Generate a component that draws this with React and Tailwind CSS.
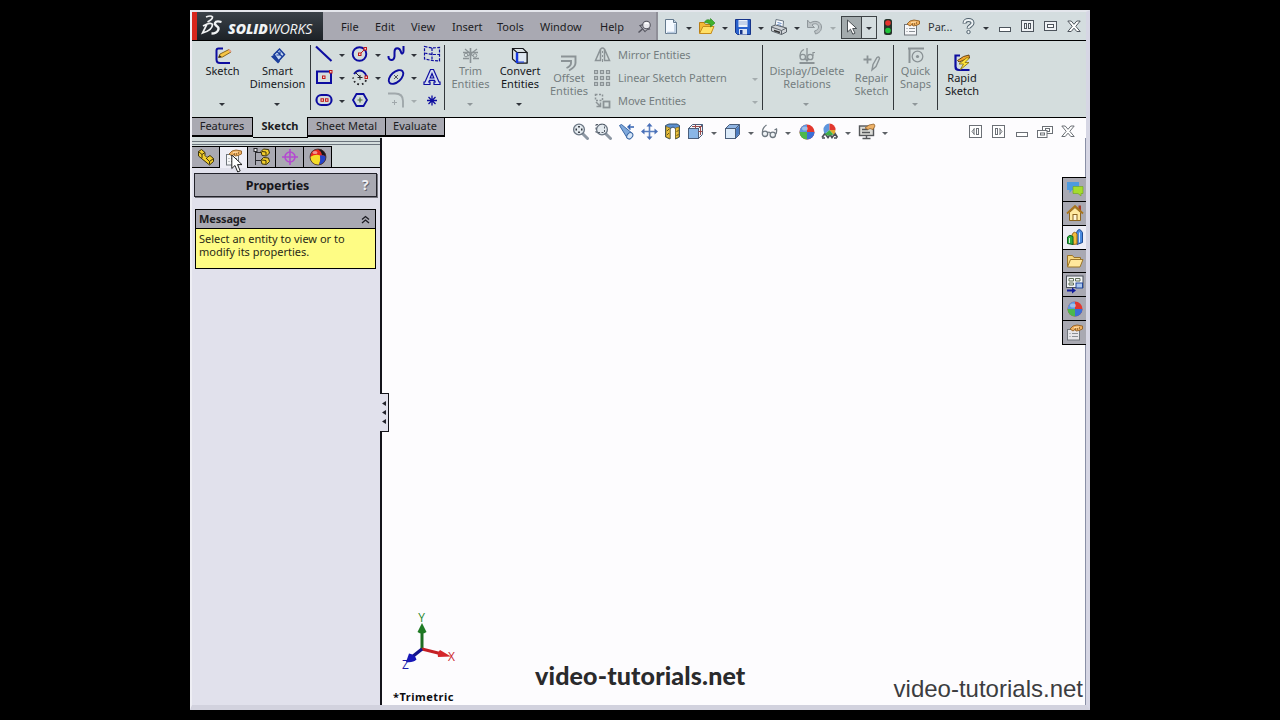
import clsx from 'clsx';

/* ---------- small building blocks ---------- */

function Svg({ w = 18, h = 18, children, className }) {
  return (
    <svg width={w} height={h} viewBox={`0 0 ${w} ${h}`} fill="none" className={clsx('block shrink-0', className)}>
      {children}
    </svg>
  );
}

function Caret({ className = 'text-[#30343a]' }) {
  return (
    <span className="flex w-[14px] shrink-0 items-center justify-center">
      <svg width="6" height="3" viewBox="0 0 6 3" className={clsx('mt-[3px] block', className)}>
        <path d="M0 0h6L3 3z" fill="currentColor" />
      </svg>
    </span>
  );
}

function Slot({ className = 'w-[22px]', children }) {
  return <span className={clsx('flex shrink-0 items-center justify-center', className)}>{children}</span>;
}

/* ---------- title bar icons ---------- */

const PinIcon = () => (
  <Svg w={16} h={16}>
    <path d="M1.500 13.500l4-3.500" stroke="#55555f" strokeWidth="1.600" />
    <path d="M3 6.500q3 0 4.500-3l5 6.500q-3 .5-4.500 2.500z" fill="#c2c2ca" stroke="#55555f" strokeWidth="1.100" />
    <circle cx="9.500" cy="6" r="3.800" fill="#e8e8ec" stroke="#55555f" strokeWidth="1.100" />
    <path d="M8 5q1.500-2 3.500 0" stroke="#fff" strokeWidth="1.500" />
  </Svg>
);

const NewIcon = () => (
  <Svg w={16} h={18}>
    <path d="M2.500 1.500h8l3 3v11h-11z" fill="#f4f9ff" stroke="#64798d" />
    <path d="M10.500 1.500v3h3" fill="#c6d6e6" stroke="#64798d" />
    <path d="M12 6v9M4 14.500h8" stroke="#b4c8de" strokeWidth="1.500" />
  </Svg>
);

const OpenIcon = () => (
  <Svg w={18} h={18}>
    <path d="M1.500 15V4.500h4.500l1.500 2h6V15z" fill="#f3b936" stroke="#b97e14" />
    <path d="M1.500 15.500l3.500-7h11l-3 7z" fill="#ffe066" stroke="#c68d1c" />
    <path d="M6.500 4.500c1-3 4-3.500 6-2V.5l4.500 4.500-4.500 4V6.500c-2-1.500-4-2-6-2z" fill="#40b22e" stroke="#23861a" strokeWidth=".6" />
  </Svg>
);

const SaveIcon = () => (
  <Svg w={16} h={16}>
    <path d="M.5.500h15v15H2.500l-2-2z" fill="#2a62cc" stroke="#16348a" />
    <rect x="3.500" y="1" width="9" height="7" fill="#edf3fb" />
    <path d="M4 3h8M4 5h8" stroke="#9cb2d8" />
    <rect x="4" y="10" width="8" height="5.500" fill="#dbe4f3" />
    <rect x="5" y="11" width="2.500" height="4" fill="#16348a" />
  </Svg>
);

const PrintIcon = () => (
  <Svg w={18} h={18}>
    <path d="M5 8l1-6.500 7.500 1.500-.5 6z" fill="#fafcff" stroke="#6c7884" />
    <path d="M7.500 4.500l4 1M7.300 6.500l4 1" stroke="#5f86c0" />
    <path d="M1.500 8.500l4-1.500 11 3v4l-5 2.500-10-3.500z" fill="#cfd3d7" stroke="#5d646b" />
    <path d="M1.500 9l10 3.500 5-2.500M11.500 12.500v4" stroke="#5d646b" />
    <path d="M4 12.500l6 2" stroke="#333" strokeWidth="1.500" />
  </Svg>
);

const UndoIcon = () => (
  <Svg w={18} h={18}>
    <path d="M1.500 2v7.500h7L6 7c3-2.500 6.500-1 6.500 2 0 2-1.500 3.500-4 4l1 3c4-1 6-3.500 6-7 0-5-6-7.500-11.500-4z" fill="#bcc3c6" stroke="#8f979b" />
  </Svg>
);

const ArrowIcon = () => (
  <Svg w={12} h={17}>
    <path d="M1.500 1v12l3-2.800 2.300 5 2.200-1-2.300-4.700h4z" fill="#fff" stroke="#4a5054" />
  </Svg>
);

const TrafficIcon = () => (
  <Svg w={10} h={18}>
    <rect x="1" y="1" width="8" height="16" rx="2.500" fill="#26332b" />
    <circle cx="5" cy="5" r="2.800" fill="#e5322d" />
    <circle cx="5" cy="12.500" r="2.800" fill="#1fc43a" />
  </Svg>
);

/* sheet with a pointing hand */
const HandSheet = ({ grey }) => (
  <Svg w={17} h={17}>
    <rect x="1.500" y="5.500" width="12" height="10.500" fill={grey ? '#e6e6ea' : '#f7f8fa'} stroke="#70767c" />
    <path d="M3.500 9.500h1M3.500 12.500h1M6 9.500h6M6 12.500h6" stroke="#8b9095" />
    <path d="M4 5L7 2l4-1 5.500 1v3l-3.500 1.500-3 .5-1-1.500L7 7z" fill="#f0b060" stroke="#935f22" strokeWidth=".9" />
    <path d="M8 3.500l5-.5" stroke="#ffdfae" />
    <path d="M11 5h1M13 4h1M9 5h1" stroke="#5d3c14" />
  </Svg>
);

const HelpIcon = () => (
  <Svg w={13} h={17}>
    <path d="M2.500 5.500C2.500 1 10.500 1 10.500 5c0 3-4 2.500-4 5.500" stroke="#50606c" strokeWidth="4" />
    <path d="M2.500 5C2.500 1 10.500 1 10.500 5c0 3-4 2.500-4 5" stroke="#eef3f5" strokeWidth="2" />
    <circle cx="6.500" cy="14" r="1.700" fill="#eef3f5" stroke="#50606c" />
  </Svg>
);

const MinIcon = ({ c }) => (
  <Svg w={14} h={14}>
    <rect x="1.500" y="7.500" width="11" height="4" fill="#fff" stroke={c} />
  </Svg>
);

const CloseIcon = ({ c }) => (
  <Svg w={14} h={14}>
    <path d="M.8 1h3.400L7 4.300 9.800 1h3.400L8.800 6.300l4.400 5.200H9.800L7 8.200l-2.800 3.300H.8l4.400-5.200z" fill="#fff" stroke={c} />
  </Svg>
);

const ColsIcon = ({ c }) => (
  <Svg w={13} h={13}>
    <rect x=".5" y=".5" width="12" height="11" fill="#eef1f4" stroke={c} />
    <rect x="3.500" y="3.500" width="2" height="5" stroke={c} />
    <rect x="7.500" y="3.500" width="2" height="5" stroke={c} />
  </Svg>
);

const MaxIcon = ({ c }) => (
  <Svg w={13} h={13}>
    <rect x=".5" y="1.500" width="12" height="9" fill="#eef1f4" stroke={c} />
    <rect x="3.500" y="4.500" width="6" height="3" fill="#fff" stroke={c} />
  </Svg>
);

const RestoreIcon = ({ c }) => (
  <Svg w={16} h={14}>
    <rect x="5.500" y="1.500" width="10" height="7" fill="#fff" stroke={c} />
    <rect x="8.500" y="3.500" width="4" height="3" fill="#fff" stroke={c} />
    <rect x=".5" y="5.500" width="9.500" height="7" fill="#fff" stroke={c} />
    <rect x="3.500" y="8" width="4" height="2" fill="#fff" stroke={c} />
  </Svg>
);

const PaneIcon = ({ c, flip }) => (
  <Svg w={13} h={13} className={flip && '-scale-x-100'}>
    <rect x=".5" y=".5" width="12" height="12" fill="#fff" stroke={c} />
    <path d="M5.500 3.500L3 6.500l2.500 3M5 3.500v6" stroke={c} />
    <rect x="7.500" y="3.500" width="2" height="6" stroke={c} />
  </Svg>
);

/* ---------- ribbon icons ---------- */

const NAVY = '#0d0da0';
const GREY = '#8b9396';

const SketchIcon = () => (
  <Svg w={18} h={18}>
    <path d="M9 1.500H4.500Q2.500 1.500 2.500 3.500v9Q2.500 16 6 16h10" stroke={NAVY} strokeWidth="2" />
    <path d="M4.500 10.500l1.500-3.500 9-4.500 2 2.500-8.500 5z" fill="#f6c544" stroke="#7d5a12" strokeWidth=".9" />
    <path d="M4.500 10.500l1-2.500 2 2z" fill="#222" />
    <path d="M14 3l1.500-1 2 2.500-1.500 1z" fill="#e8a08c" />
  </Svg>
);

const SmartDimIcon = () => (
  <Svg w={18} h={18}>
    <path d="M5 7.500L10.500 2l5 5.500-6 6.500z" fill="#c3d6f0" stroke="#173a9a" strokeWidth="1.500" />
    <path d="M2 9.500l7 7 2-2-6.500-6.500z" fill="#1c3f9c" />
    <path d="M8 4.500l5 5M7.500 8h3.500V4.500" stroke="#173a9a" strokeWidth="1.200" />
  </Svg>
);

const TrimIcon = () => (
  <Svg w={18} h={18}>
    <path d="M1 5.500h15M1 11.500h6M11 11.500h6M8.500 1v15" stroke={GREY} strokeWidth="1.600" />
    <path d="M3 2l8 7M15 2l-9 7" stroke={GREY} strokeWidth="1.200" />
    <circle cx="4" cy="8" r="1.800" stroke={GREY} />
    <circle cx="13" cy="8.500" r="1.800" stroke={GREY} />
  </Svg>
);

const ConvertIcon = () => (
  <Svg w={18} h={18}>
    <path d="M1.500 1.500h10.500l4 4v10.500h-10l-4.500-4z" fill="#dde4e9" stroke="#16181c" strokeWidth="1.200" />
    <path d="M1.500 1.500l4.500 4h10" stroke="#16181c" strokeWidth="1.100" />
    <rect x="6.500" y="5.500" width="9.500" height="10.500" fill="#dfe8f2" stroke="#16181c" strokeWidth="1.100" />
    <path d="M6 5.500V16" stroke="#1537e0" strokeWidth="2.400" />
    <path d="M7 15h6" stroke="#1537e0" />
  </Svg>
);

const OffsetIcon = () => (
  <Svg w={18} h={18}>
    <path d="M1 2.500h14.500V9Q15.500 13 9 16.500M1 7h10V9q0 3-4.500 5" stroke={GREY} strokeWidth="1.900" />
  </Svg>
);

const MirrorIcon = () => (
  <Svg w={17} h={16}>
    <path d="M6.500 2L1.500 13.500h5zM10.500 2l5 11.500h-5z" stroke={GREY} strokeWidth="1.500" />
    <path d="M6.500 2q2-2 4 0" stroke={GREY} strokeWidth="1.300" />
    <path d="M8.500 4v2M8.500 8v2M8.500 12v3" stroke={GREY} />
  </Svg>
);

const PatternIcon = () => (
  <Svg w={17} h={16}>
    {[2, 8, 14].map(y =>
      [2, 8, 14].map(x => (
        <rect key={`${x}-${y}`} x={x - 1.5} y={y - 1.5} width="3" height="3" fill="#c3cbcd" stroke={GREY} strokeWidth="1.200" />
      ))
    )}
  </Svg>
);

const MoveIcon = () => (
  <Svg w={17} h={16}>
    <rect x="1.500" y="1.500" width="7" height="6" stroke={GREY} strokeWidth="1.500" strokeDasharray="2 1.500" />
    <rect x="9.500" y="8.500" width="6" height="6" stroke={GREY} strokeWidth="1.800" />
    <path d="M2 9l4 4M6.500 9.500v4h-4" stroke={GREY} strokeWidth="1.500" />
  </Svg>
);

const RelationsIcon = () => (
  <Svg w={18} h={18}>
    <path d="M1.500 16h15" stroke={GREY} strokeWidth="2" />
    <path d="M9 1v13M7 11.500l2 2.500 2-2.500" stroke={GREY} strokeWidth="1.300" />
    <path d="M6 2.500Q2 4 2 9.500" stroke={GREY} strokeWidth="1.300" />
    <circle cx="4.800" cy="10" r="2.700" stroke={GREY} strokeWidth="1.300" />
    <circle cx="12.200" cy="10" r="2.700" stroke={GREY} strokeWidth="1.300" />
    <path d="M15 9V5.500h2" stroke={GREY} strokeWidth="1.200" />
  </Svg>
);

const RepairIcon = () => (
  <Svg w={18} h={18}>
    <path d="M4.500 1.500v8M.5 5.500h8" stroke={GREY} strokeWidth="1.800" />
    <path d="M9 16l1-5.500 4-7q2-1.500 2.500 1l-3.500 8z" stroke={GREY} strokeWidth="1.400" />
  </Svg>
);

const SnapsIcon = () => (
  <Svg w={18} h={18}>
    <path d="M1 1.500h16M2.500 1.500V16" stroke={GREY} strokeWidth="2" />
    <circle cx="10.500" cy="9.500" r="5.300" stroke={GREY} strokeWidth="1.300" />
    <circle cx="10.500" cy="9.500" r="1.600" fill={GREY} />
  </Svg>
);

const RapidIcon = () => (
  <Svg w={18} h={18}>
    <path d="M7 1.500H2.500v11q0 3.500 3.500 3.500h10.500" stroke={NAVY} strokeWidth="2.200" />
    <path d="M4.500 6.500l6-4 5.500-1.500.5 3-5.500 2-5 2z" fill="#f0a62c" stroke="#5c3a08" strokeWidth=".9" />
    <path d="M14 3.500l-8 6.500h4.500l-3.500 6 9-7.500h-4l4-4z" fill="#ffe53c" stroke="#836a08" strokeWidth=".8" />
  </Svg>
);

const Dot = ({ x, y }) => <rect x={x - 1} y={y - 1} width="2.500" height="2.500" fill="#f6d0d0" stroke="#c01818" strokeWidth="1" />;

const LineIcon = () => (
  <Svg><path d="M1 1.500L16.500 16" stroke={NAVY} strokeWidth="2.100" /></Svg>
);
const CircleIcon = () => (
  <Svg>
    <circle cx="8.500" cy="9" r="6.800" stroke={NAVY} strokeWidth="1.900" />
    <path d="M9 9l5-5" stroke="#c01818" />
    <Dot x={8.5} y={9} /><Dot x={14} y={3.5} />
  </Svg>
);
const SplineIcon = () => (
  <Svg>
    <path d="M1.500 11c-.5 5 5.500 5.500 6 .5V7c0-5 5-5 6.500 0 .5 2.500 2.500 2 2.500-1V1" stroke={NAVY} strokeWidth="2" />
  </Svg>
);
const PlaneIcon = () => (
  <Svg>
    <path d="M1.500 1.500l7.500 1.500 7.500-.5v13.500l-7.500-.5-7.500-1.500zM1.500 8l7.500 1.500h7.500M9 3v13" stroke={NAVY} strokeWidth="1.200" strokeDasharray="3 1.300" />
  </Svg>
);
const RectIcon = () => (
  <Svg>
    <rect x="2" y="3.500" width="14" height="11.500" stroke={NAVY} strokeWidth="2" />
    <Dot x={8.5} y={9} /><Dot x={15.500} y={3.500} />
  </Svg>
);
const ArcIcon = () => (
  <Svg>
    <path d="M3 6Q7 .5 12 3.500q3 2 3.500 5" stroke={NAVY} strokeWidth="1.900" />
    <path d="M15 12q-1 4-6 4.500-6-.5-7-7" stroke="#26262a" strokeWidth="1.800" strokeDasharray="1.800 2.600" />
    <path d="M4 4l5 5M9 7v5M6.500 9.500h5" stroke="#26262a" />
    <Dot x={15} y={9} />
  </Svg>
);
const EllipseIcon = () => (
  <Svg>
    <ellipse cx="9" cy="9" rx="8.700" ry="5" transform="rotate(-42 9 9)" stroke={NAVY} strokeWidth="1.900" />
    <path d="M7 7l4 4M11 7l-4 4" stroke="#50545c" />
  </Svg>
);
const LetterIcon = () => (
  <Svg>
    <path
      d="M7.500 1.500h3l5.500 12.500h1v2.500h-6v-2.500h1.200l-.7-1.700H6.500L5.800 14H7v2.500H1V14h1z"
      fill="#d5ddf0"
      stroke={NAVY}
      strokeWidth="1.200"
    />
    <path d="M9 5.500l1.800 4.500H7.200z" fill="#d4dddd" stroke={NAVY} strokeWidth="1.200" />
  </Svg>
);
const SlotIcon = () => (
  <Svg>
    <rect x="1.500" y="4" width="15" height="10" rx="4.800" stroke={NAVY} strokeWidth="2.100" />
    <Dot x={7} y={8.800} /><Dot x={11.500} y={8.800} />
  </Svg>
);
const HexIcon = () => (
  <Svg>
    <path d="M5.500 3h7L16 9l-3.500 6h-7L2 9z" stroke={NAVY} strokeWidth="1.800" />
    <path d="M9 6.500v5M6.500 9h5" stroke="#4c6e3a" strokeWidth="1.200" />
  </Svg>
);
const FilletIcon = () => (
  <Svg>
    <path d="M1 2.500h7q8 0 8 7.500v6.500" stroke="#a0a8ab" strokeWidth="1.900" />
    <path d="M7.500 9v5M5 11.500h5" stroke="#a0a8ab" />
  </Svg>
);
const PointIcon = () => (
  <Svg>
    <path d="M9 4.500v10M4 9.500h10M5.500 6l7 7M12.500 6l-7 7" stroke={NAVY} strokeWidth="1.300" />
  </Svg>
);

/* ---------- heads-up view icons ---------- */

const ZoomFit = ({ dashed }) => (
  <Svg w={17} h={17}>
    <path d="M10 10l5.500 5.500" stroke="#8d97a3" strokeWidth="3" strokeLinecap="round" />
    <circle cx="7" cy="6.500" r="5.400" fill="#e3e9ee" stroke="#6b7683" strokeWidth="1.300" />
    {dashed
      ? <path d="M1 1.500h8.500v8H1z" stroke="#555d68" strokeDasharray="2 1.500" />
      : <path d="M7 3v1.500M7 8.500V10M3.500 6.500H5M9 6.500h1.500" stroke="#30363e" strokeWidth="1.800" />}
  </Svg>
);
const PrevView = () => (
  <Svg w={17} h={17}>
    <path d="M1.500 2.500l2-1 11 9q1 4-5 5z" fill="#7fa9dc" stroke="#3c68a5" />
    <ellipse cx="11.800" cy="12.800" rx="3.500" ry="2.600" transform="rotate(-50 11.800 12.800)" fill="#d6e6f8" stroke="#3c68a5" />
    <path d="M16 4h-5M12.500 1.500L10 4l2.500 2.500" stroke="#2f5fb0" strokeWidth="1.400" />
  </Svg>
);
const PanIcon = () => (
  <Svg w={17} h={17}>
    <path d="M8.500 2v13M2 8.500h13" stroke="#5a7fc0" strokeWidth="1.600" />
    <path d="M8.500 0l3 3.500h-6zM8.500 17l3-3.500h-6zM0 8.500l3.500-3v6zM17 8.500l-3.500-3v6z" fill="#4a70b8" />
  </Svg>
);
const SectionIcon = () => (
  <Svg w={17} h={17}>
    <path d="M1.500 2.500L5 1h8l2.500 1.500v11.500l-4 2V5.500L9 4 6 5.500V16l-4.500-2z" fill="#5b8fd0" stroke="#35536f" />
    <path d="M2 3.500v10.500l4 1.500V5zM11.500 5v10.500l3.500-1.500V4z" fill="#e9bf3a" stroke="#7b651d" strokeWidth=".7" />
    <path d="M3 8l2-2M3 12l2-2M12.500 9l2-2M12.500 13l2-2" stroke="#6a5516" />
  </Svg>
);
const CubeIcon = ({ lines }) => (
  <Svg w={17} h={17}>
    <path d="M1.500 5.500l4-4h10v10l-4 4h-10z" fill={lines ? '#f3f5f8' : '#8fb4e2'} stroke="#4b5f7c" />
    <path d="M11.500 5.500l4-4" stroke="#4b5f7c" />
    <rect x="1.500" y="5.500" width="10" height="10" fill={lines ? '#8ab6e6' : '#dcebfa'} stroke="#4b5f7c" />
    {!lines && <path d="M12 6l3-3v8l-3 3.500z" fill="#4d7cc0" />}
    {lines && <path d="M8.500 1.500v4M5 3.500h10M13.500 3v9M11.500 8.500h4" stroke="#9a4c4c" />}
  </Svg>
);
const GlassesIcon = () => (
  <Svg w={17} h={15}>
    <path d="M5.500 1Q1 4 1.500 9M7 8.500q1.500-1 2.500 1M15 10q1-3 .5-5l-2 1" stroke="#6f7880" strokeWidth="1.300" />
    <circle cx="4" cy="9.800" r="2.700" fill="#eef2f5" stroke="#6f7880" strokeWidth="1.300" />
    <circle cx="11.800" cy="10.800" r="2.700" fill="#eef2f5" stroke="#6f7880" strokeWidth="1.300" />
  </Svg>
);

/* quarters go clockwise from the top right */
const Ball = ({ colors }) => (
  <svg width="16" height="16" viewBox="0 0 16 16" className="block shrink-0">
    <circle cx="8" cy="8" r="7.500" fill={colors[0]} />
    <path d="M8 8h7.500A7.500 7.500 0 0 1 8 15.500z" fill={colors[1]} />
    <path d="M8 8H.5A7.500 7.500 0 0 0 8 15.500z" fill={colors[2]} />
    <path d="M8 8V.5A7.500 7.500 0 0 0 .5 8z" fill={colors[3]} />
    <ellipse cx="6" cy="4.500" rx="3" ry="2" fill="#fff" opacity=".4" />
  </svg>
);
const AppearanceBall = () => <Ball colors={['#e2382e', '#3c6fd6', '#4cb84c', '#5d96dd']} />;

const RenderBall = () => (
  <Svg w={18} h={18}>
    <circle cx="9" cy="9" r="8" fill="#e6281e" />
    <path d="M9 1a8 8 0 0 1 8 8q-1.500-2-4-2Q12 3 9 1z" fill="#18181c" />
    <path d="M1 9q6-3.500 10-1.500 1 4-1 9.500A8 8 0 0 1 1 9z" fill="#f5dc28" />
    <path d="M11 7.500q4-1 6 1.500a8 8 0 0 1-7 8q2-5 1-9.500z" fill="#2444cc" />
    <circle cx="9" cy="9" r="8" stroke="#3a3030" strokeWidth=".8" />
    <ellipse cx="6" cy="4.500" rx="2.500" ry="1.500" fill="#fff" opacity=".5" />
  </Svg>
);
const SceneIcon = () => (
  <Svg w={17} h={17}>
    <path d="M1 14.500l3-4 3 4 2-3 2 3 3-4 2.500 4M1 15h3M13 15h3" stroke="#4a4f55" strokeWidth="1.700" />
    <path d="M8.500 7V.5A6 6 0 0 0 2.500 7q0 2 1.500 4z" fill="#5d96dd" />
    <path d="M8.500 7V.5A6 6 0 0 1 14.500 7z" fill="#e2382e" />
    <path d="M8.500 7h6q0 3-2 4.500z" fill="#e2a82e" />
    <path d="M8.500 7L4 11q2 2 5 1.500l3.500-1z" fill="#3fae48" />
  </Svg>
);
const MonitorIcon = () => (
  <Svg w={18} h={17}>
    <rect x="1.500" y="3" width="14" height="9.500" fill="#dcdcd8" stroke="#55575a" strokeWidth="1.400" />
    <path d="M4 6.500h6M4 9.500h8M8.500 13v2M4.500 15.500h8" stroke="#55575a" strokeWidth="1.400" />
    <path d="M7 5l4-3 5-1 1 2-2 3.500-3-1-2 1z" fill="#eeb268" stroke="#96632a" strokeWidth=".8" />
  </Svg>
);

/* ---------- manager panel + task pane icons ---------- */

const PartIcon = () => (
  <Svg w={18} h={18}>
    <path d="M1.500 3.500l3-2 3.500 3v3l2 2 3-2 3.500 3v3l-4 3.500L1.500 8z" fill="#f2ce2c" stroke="#3f350c" />
    <path d="M1.500 3.500l3.500 3v3.500M5 6.500l3-2M12.500 13.500v3M12.500 13.500L9 10M12.500 13.500l4-3" stroke="#3f350c" />
  </Svg>
);
const TreeIcon = () => (
  <Svg w={18} h={18}>
    <path d="M2.500 1v16M2.500 4.500h6M2.500 12.500h6" stroke="#2a2a2e" />
    <rect x="1" y=".5" width="3" height="3" fill="#eee" stroke="#2a2a2e" />
    <path d="M8 3.500l2.500-2.500 5 .5 1 3.500-3 3-4.500-.5zM8 12l2.500-2.500 5 .5 1 3.500-3 3-4.500-.5z" fill="#f2ce2c" stroke="#3f350c" />
    <path d="M9 3.500l4 .5v3.500M9 12l4 .5V16" stroke="#3f350c" />
  </Svg>
);
const TargetIcon = () => (
  <Svg w={18} h={18}>
    <circle cx="9" cy="9" r="5" stroke="#b44ad0" strokeWidth="1.600" />
    <path d="M9 1v16M1 9h16" stroke="#b44ad0" strokeWidth="1.600" />
  </Svg>
);
const ChatIcon = () => (
  <Svg w={18} h={18}>
    <path d="M1 2h12v8H6l-2.500 3V10H1z" fill="#4d9ade" />
    <path d="M7 6.500h10v7h-2v2.500L12 13.500H7z" fill="#a5dc2e" stroke="#6da31c" strokeWidth=".6" />
  </Svg>
);
const HomeIcon = () => (
  <Svg w={18} h={18}>
    <path d="M12.500 1.500h2.500v6h-2.500z" fill="#a63c28" />
    <path d="M3.500 8.500L9 3.500l5.500 5v8h-11z" fill="#ffe9a0" stroke="#8c6420" />
    <path d="M1 9.500l8-7.500 8 7.500" stroke="#a8741c" strokeWidth="1.800" />
    <rect x="7" y="10.500" width="4" height="6" fill="#fff7d8" stroke="#8c6420" />
  </Svg>
);
const LibraryIcon = () => (
  <Svg w={18} h={18}>
    <path d="M10.500 4.500q2.500-6 6 0v10l-5.500 2z" fill="#4a8ade" stroke="#1f4a90" />
    <path d="M6 7q2-5 5-1v10l-4 .5z" fill="#f4bc3c" stroke="#96681a" />
    <path d="M1.500 9q2-3 5.500-.5v8l-5.500-1z" fill="#2fb040" stroke="#0f5e22" />
    <path d="M3.500 10v5M13.500 4.500v10" stroke="#fff" strokeOpacity=".8" />
  </Svg>
);
const FolderIcon = () => (
  <Svg w={18} h={18}>
    <path d="M1.500 14.500V3.500h5l1.500 2h6.500v3" fill="#f6d67c" stroke="#9a7428" />
    <path d="M1.500 15l3-7.500h12.500l-3 7.500z" fill="#ffe79c" stroke="#9a7428" />
  </Svg>
);
const PaletteIcon = () => (
  <Svg w={18} h={19}>
    <rect x=".5" y="1" width="16.500" height="11.500" fill="#f4f6f8" stroke="#4b5158" />
    <path d="M3 3.500h4.500v2.500H3zM9.500 3.500H14V6H9.500zM3 8h4.500v2H3z" stroke="#5f6f55" />
    <rect x="10" y="8" width="6.500" height="5" fill="#aac6ee" stroke="#23479a" />
    <path d="M1 15.500h6" stroke="#101c9c" strokeWidth="2" />
    <path d="M6 12.500l4 3-4 3z" fill="#101c9c" />
  </Svg>
);

/* ---------- data ---------- */

const menus = [
  { label: 'File', w: 'w-[34px]' },
  { label: 'Edit', w: 'w-[36px]' },
  { label: 'View', w: 'w-[41px]' },
  { label: 'Insert', w: 'w-[45px]' },
  { label: 'Tools', w: 'w-[43px]' },
  { label: 'Window', w: 'w-[60px]' },
  { label: 'Help', w: 'w-[37px]' },
];

const quickAccess = [NewIcon, OpenIcon, SaveIcon, PrintIcon];

const sketchTools = [
  [LineIcon, CircleIcon, SplineIcon, PlaneIcon],
  [RectIcon, ArcIcon, EllipseIcon, LetterIcon],
  [SlotIcon, HexIcon, FilletIcon, PointIcon],
];

const listTools = [
  { icon: MirrorIcon, label: 'Mirror Entities' },
  { icon: PatternIcon, label: 'Linear Sketch Pattern', caret: true },
  { icon: MoveIcon, label: 'Move Entities', caret: true },
];

const tabs = [
  { label: 'Features', w: 'w-[61px]' },
  { label: 'Sketch', w: 'w-[55px]', active: true },
  { label: 'Sheet Metal', w: 'w-[78px]' },
  { label: 'Evaluate', w: 'w-[59px]' },
];

const taskPane = [ChatIcon, HomeIcon, LibraryIcon, FolderIcon, PaletteIcon, AppearanceBall, () => <HandSheet grey />];

/* ---------- sections ---------- */

function Logo() {
  return (
    <div className="flex h-[28px] w-[131px] shrink-0 items-center border-l-[5px] border-[#d8261c] bg-linear-to-b from-[#3b4249] to-[#1d2227]">
      <Svg w={24} h={24} className="ml-[3px]">
        <path d="M6 3q5-2 6.500 0 0 2.500-5 5" stroke="#f1f3f4" strokeWidth="1.700" />
        <path d="M3 12q8-4.500 9.500-1.500 0 5.500-10 8.500l4.500-9" stroke="#f1f3f4" strokeWidth="1.700" />
        <path d="M21.500 8q-5.500-1.500-6.500 1-.5 1.500 2 3.200t1 4.300q-1.500 3-6.500 3" stroke="#f1f3f4" strokeWidth="2.300" />
      </Svg>
      <span className="mt-[6px] ml-[4px] whitespace-nowrap font-['Open_Sans',sans-serif] text-[14px] leading-none text-[#f1f3f4] italic">
        <b className="font-extrabold">SOLID</b>
        <span className="tracking-[-0.15px]">WORKS</span>
      </span>
    </div>
  );
}

function TitleBar() {
  const c = '#4d545c';
  return (
    <header className="flex h-[29px] border-b border-black bg-[#d4dddf]">
      <Logo />
      <div className="flex w-[335px] shrink-0 items-center border-r-2 border-[#8f8f98] bg-[#a9a9b2] pt-[2px] pl-[18px] text-[#1c1c22]">
        {menus.map(m => (
          <span key={m.label} className={m.w}>{m.label}</span>
        ))}
        <span><PinIcon /></span>
      </div>
      <div className="flex flex-1 items-center pt-[2px] pl-[2px]">
        {quickAccess.map((Icon, i) => (
          <span key={i} className="flex items-center">
            <Slot><Icon /></Slot>
            <Caret />
          </span>
        ))}
        <Slot><UndoIcon /></Slot>
        <Caret className="text-[#a4acae]" />
        <span className="ml-[1px] flex h-[23px] w-[36px] border border-[#3d4346]">
          <span className="flex w-[22px] items-center justify-center border-r border-[#3d4346] bg-[#a3abad]"><ArrowIcon /></span>
          <Caret />
        </span>
        <Slot><TrafficIcon /></Slot>
        <Slot className="w-[25px]"><HandSheet /></Slot>
        <span className="ml-[4px] w-[29px] text-[#2e3338]">Par...</span>
        <Slot className="w-[22px] pb-[2px]"><HelpIcon /></Slot>
        <Caret />
        <span className="flex pb-px">
          <Slot className="w-[23px]"><MinIcon c={c} /></Slot>
          <Slot className="w-[23px]"><ColsIcon c={c} /></Slot>
          <Slot className="w-[23px]"><MaxIcon c={c} /></Slot>
          <Slot className="w-[23px]"><CloseIcon c={c} /></Slot>
        </span>
      </div>
    </header>
  );
}

function BigButton({ icon: Icon, lines, w, caret, disabled, low }) {
  return (
    <div className={clsx('flex shrink-0 flex-col items-center', w, low ? 'pt-[13px]' : 'pt-[6px]', disabled ? 'text-[#757d80]' : 'text-[#16181c]')}>
      <Icon />
      <div className="-mt-px text-center leading-[13px] whitespace-nowrap">
        {lines.map(l => <div key={l}>{l}</div>)}
      </div>
      {caret && (
        <div className={clsx('-translate-x-px', lines.length === 1 ? 'mt-[23px]' : 'mt-[10px]')}>
          <Caret className={disabled ? 'text-[#8f979a]' : undefined} />
        </div>
      )}
    </div>
  );
}

const Divider = () => <div className="mt-[4px] h-[65px] w-px shrink-0 bg-[#33383b]" />;

function Ribbon() {
  return (
    <section className="flex h-[77px] border-b border-black bg-[#d4dddd]">
      <BigButton icon={SketchIcon} lines={['Sketch']} w="w-[61px]" caret />
      <BigButton icon={SmartDimIcon} lines={['Smart', 'Dimension']} w="w-[49px] mr-[8px]" caret />
      <Divider />
      <div className="ml-[2px] flex w-[131px] shrink-0 flex-col pt-[1px]">
        {sketchTools.map((row, r) => (
          <div key={r} className="flex h-[23px] items-center">
            {row.map((Icon, i) => (
              <span key={i} className="flex items-center">
                <Slot><Icon /></Slot>
                {i < 3 && (
                  <Caret
                    className={clsx(
                      r === 2 && i === 1 && 'opacity-0',
                      r === 2 && i === 2 ? 'text-[#a4acae]' : 'text-[#30343a]'
                    )}
                  />
                )}
              </span>
            ))}
          </div>
        ))}
      </div>
      <Divider />
      <BigButton icon={TrimIcon} lines={['Trim', 'Entities']} w="w-[51px]" caret disabled />
      <BigButton icon={ConvertIcon} lines={['Convert', 'Entities']} w="w-[48px]" caret />
      <BigButton icon={OffsetIcon} lines={['Offset', 'Entities']} w="w-[50px]" disabled low />
      <div className="flex w-[168px] shrink-0 flex-col pt-[2px] text-[#757d80]">
        {listTools.map(({ icon: Icon, label, caret }) => (
          <div key={label} className="flex h-[23px] items-center">
            <Icon />
            <span className="ml-[7px] flex-1 tracking-[-0.08px] whitespace-nowrap">{label}</span>
            {caret && <Caret className="text-[#a4acae]" />}
          </div>
        ))}
      </div>
      <Divider />
      <BigButton icon={RelationsIcon} lines={['Display/Delete', 'Relations']} w="w-[88px]" caret disabled />
      <BigButton icon={RepairIcon} lines={['Repair', 'Sketch']} w="w-[41px] mr-px" disabled low />
      <Divider />
      <BigButton icon={SnapsIcon} lines={['Quick', 'Snaps']} w="w-[43px]" caret disabled />
      <Divider />
      <BigButton icon={RapidIcon} lines={['Rapid', 'Sketch']} w="w-[48px]" low />
    </section>
  );
}

function TabRow() {
  const g = '#6c7076';
  const dim = 'text-[#5d6166]';
  return (
    <div className="relative z-10 flex h-[20px] bg-[#fdfcfe]">
      <div className="flex w-[253px] shrink-0 items-start bg-linear-to-r from-[#d4dddd] from-[75%] to-[#fdfcfe] to-[75%]">
        {tabs.map(t => (
          <span
            key={t.label}
            className={clsx(
              'flex shrink-0 justify-center border-r border-black whitespace-nowrap text-[#1c1c22]',
              t.w,
              t.active
                ? '-mt-px h-[21px] border-b bg-[#d4dddd] pt-px font-bold'
                : 'h-[19px] border-b-2 bg-[#a9a9b2]'
            )}
          >
            {t.label}
          </span>
        ))}
      </div>
      <div className="ml-[124px] flex h-[27px] items-center">
        <Slot className="w-[23px]"><ZoomFit /></Slot>
        <Slot className="w-[23px]"><ZoomFit dashed /></Slot>
        <Slot className="w-[23px]"><PrevView /></Slot>
        <Slot className="w-[23px]"><PanIcon /></Slot>
        <Slot className="w-[23px]"><SectionIcon /></Slot>
        <Slot className="w-[23px]"><CubeIcon lines /></Slot>
        <Caret className={dim} />
        <Slot className="w-[23px]"><CubeIcon /></Slot>
        <Caret className={dim} />
        <Slot className="w-[23px]"><GlassesIcon /></Slot>
        <Caret className={dim} />
        <Slot className="w-[23px]"><AppearanceBall /></Slot>
        <Slot className="w-[23px]"><SceneIcon /></Slot>
        <Caret className={dim} />
        <Slot className="w-[23px]"><MonitorIcon /></Slot>
        <Caret className={dim} />
      </div>
      <div className="mr-[7px] ml-auto flex h-[27px] items-center">
        <Slot className="w-[23px]"><PaneIcon c={g} /></Slot>
        <Slot className="w-[23px]"><PaneIcon c={g} flip /></Slot>
        <Slot className="w-[23px]"><MinIcon c={g} /></Slot>
        <Slot className="w-[23px]"><RestoreIcon c={g} /></Slot>
        <Slot className="w-[23px]"><CloseIcon c={g} /></Slot>
      </div>
    </div>
  );
}

function ManagerPanel() {
  const items = [PartIcon, HandSheet, TreeIcon, TargetIcon, RenderBall];
  return (
    <aside className="relative z-20 flex w-[190px] shrink-0 flex-col border-r-2 border-[#14141a] bg-[#e1e1ec]">
      <div className="bg-[#d4dddd] pt-[3px]">
        <div className="h-[4px] border-y border-[#6b737c]" />
        <div className="flex h-[23px] items-end border-b border-black">
          {items.map((Icon, i) => (
            <span
              key={i}
              className={clsx(
                'flex w-[28px] items-center justify-center border-t border-r border-black',
                i === 1 ? '-mb-px h-[22px] bg-[#eeeef6]' : 'h-[21px] bg-[#a9a9b2]'
              )}
            >
              <Icon />
            </span>
          ))}
        </div>
      </div>

      <div className="mt-[5px] ml-[2px] flex h-[24px] w-[183px] items-center border border-[#22222a] bg-[#a9a9b2] pt-px shadow-[1px_1px_0_#77777f]">
        <span className="flex-1 text-center text-[12.5px] font-bold tracking-[-0.15px] text-[#16161a]">
          <span className="mr-[16px]">Properties</span>
        </span>
        <span className="-ml-[16px] w-[16px] pb-[2px] pl-[2px] font-['Open_Sans',sans-serif] text-[14px] font-bold text-[#f0f0f4] [text-shadow:1px_1px_0_#66666f]">?</span>
      </div>

      <div className="mt-[12px] ml-[3px] h-[60px] w-[181px] border border-black bg-[#fefc84]">
        <div className="flex h-[19px] items-center justify-between border-b border-black bg-[#a9a9b2] pr-[5px] pl-[3px]">
          <span className="font-bold tracking-[-0.15px] text-[#1c1c22]">Message</span>
          <Svg w={9} h={9}>
            <path d="M1 4.500l3.500-3 3.500 3M1 8l3.500-3L8 8" stroke="#1c1c22" strokeWidth="1.300" />
          </Svg>
        </div>
        <p className="pt-[3px] pl-[3px] leading-[13px] text-[#2a2a18]">
          Select an entity to view or to
          <br />
          modify its properties.
        </p>
      </div>

      {/* splitter handle */}
      <div className="absolute top-[255px] left-[188px] z-10 flex h-[39px] w-[9px] flex-col items-center justify-center gap-[4px] border-y border-r border-[#14141a] bg-[#e1e1ec]">
        {[0, 1, 2].map(i => (
          <Svg key={i} w={4} h={5}><path d="M4 0v5L0 2.500z" fill="#22222a" /></Svg>
        ))}
      </div>

      {/* mouse pointer */}
      <svg width="12" height="20" viewBox="0 0 12 20" className="absolute top-[16px] left-[39px] z-10">
        <path d="M.8 1v13.500l3.200-3 2.700 6.500 2.500-1.100L6.500 10.600H11z" fill="#fff" stroke="#222" />
      </svg>
    </aside>
  );
}

function Triad() {
  return (
    <svg width="66" height="66" viewBox="0 0 66 66" className="absolute top-[470px] left-[16px]">
      <path d="M24 41V22" stroke="#1d6e22" strokeWidth="3" />
      <path d="M24 15l4.500 9q-4.500 3-9 0z" fill="#1f7a24" />
      <path d="M24 41l20 5" stroke="#c41f24" strokeWidth="3" />
      <path d="M53 48.500l-13 .5q-1-4 2-7z" fill="#d4262a" />
      <path d="M24 41L14 49" stroke="#14148c" strokeWidth="3.500" />
      <path d="M8 54l3-8.500q6 1 7.500 6-3.500 3.500-10.500 2.500z" fill="#1818b8" />
      <g className="font-['Open_Sans',sans-serif]" fontSize="12" textAnchor="middle">
        <text x="23.500" y="14" fill="#2a8a30">Y</text>
        <text x="53.500" y="53" fill="#cc2a30">X</text>
        <text x="7.500" y="61" fill="#1c1ca8">Z</text>
      </g>
    </svg>
  );
}

function Viewport() {
  return (
    <main className="relative flex flex-1 justify-end bg-[#fdfcfe]">
      <div className="mt-[39px] -mr-px flex h-[168px] w-[24px] flex-col border-t border-l border-black">
        {taskPane.map((Icon, i) => (
          <span
            key={i}
            className={clsx(
              'flex flex-1 items-center justify-center border-b border-black',
              i === 2 ? 'bg-[#eeeef6]' : 'bg-[#a9a9b2]'
            )}
          >
            <Icon />
          </span>
        ))}
      </div>
      <Triad />
      <span className="absolute bottom-0 left-[11px] font-bold tracking-[0.5px] text-[#0c0c10]">*Trimetric</span>
      <span className="absolute bottom-[16px] left-[153px] font-['Lato',sans-serif] text-[25px] leading-[28px] font-black tracking-[0.15px] whitespace-nowrap text-[#2a2a2c]">
        video-tutorials.net
      </span>
      <span className="absolute right-[2px] bottom-[2px] font-['Liberation_Sans',sans-serif] text-[24px] leading-[28px] whitespace-nowrap text-[#3c3c40]">
        video-tutorials.net
      </span>
    </main>
  );
}

export default function App() {
  return (
    <div className="h-[720px] w-[1280px] overflow-hidden bg-black pt-[10px] pl-[190px] font-['Noto_Sans',sans-serif] text-[11px] leading-[16px]">
      <div className="flex h-[700px] w-[900px] flex-col border-t-2 border-r-4 border-b-[5px] border-l-2 border-t-[#e4e6ec] border-r-[#d6d6e4] border-b-[#d2d2de] border-l-[#eeeef4]">
        <TitleBar />
        <Ribbon />
        <TabRow />
        <div className="flex flex-1 border-r border-[#8a90a6]">
          <ManagerPanel />
          <Viewport />
        </div>
      </div>
    </div>
  );
}
